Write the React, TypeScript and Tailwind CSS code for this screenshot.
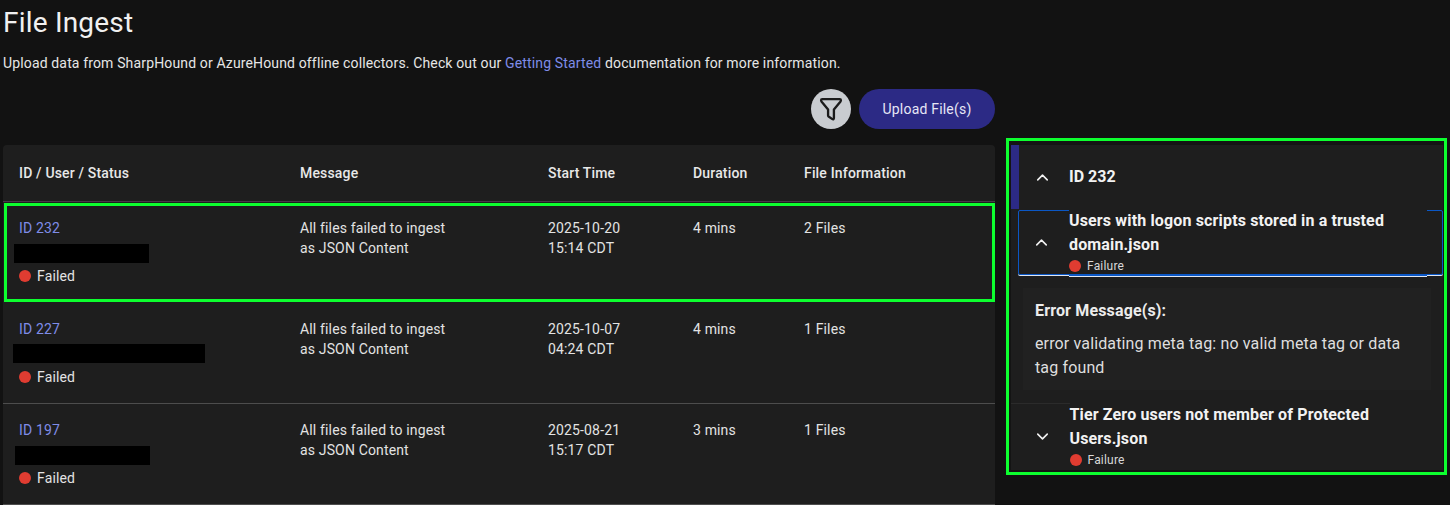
import React from "react";
import { ChevronDown, ChevronUp } from "lucide-react";

type Ingest = {
  id: number;
  barClass: string;
  statusClass: string;
  date: string;
  time: string;
  duration: string;
  files: string;
  rowClass: string;
};

const ingests: Ingest[] = [
  {
    id: 232,
    barClass: "w-[135px] ml-[-5px] mt-[6px]",
    statusClass: "mt-[3px]",
    date: "2025-10-20",
    time: "15:14 CDT",
    duration: "4 mins",
    files: "2 Files",
    rowClass:
      "h-[99px] pt-[15px] outline-3 -outline-offset-3 outline-[#0dff2f] ml-[1px] mt-[1px] mb-[2px] pl-[15px]",
  },
  {
    id: 227,
    barClass: "w-[192px] ml-[-6px] mt-[5px]",
    statusClass: "mt-[4px]",
    date: "2025-10-07",
    time: "04:24 CDT",
    duration: "4 mins",
    files: "1 Files",
    rowClass: "h-[100px] pt-[15px] border-b border-[#4d4d4d] pl-4",
  },
  {
    id: 197,
    barClass: "w-[135px] ml-[-4px] mt-[6px]",
    statusClass: "mt-[3px]",
    date: "2025-08-21",
    time: "15:17 CDT",
    duration: "3 mins",
    files: "1 Files",
    rowClass: "h-[101px] pt-[16px] border-b border-[#4d4d4d] pl-4",
  },
];

const StatusDot: React.FC = () => (
  <span className="w-3 h-3 rounded-full bg-[#e03c31] shrink-0"></span>
);

const FilterIcon: React.FC = () => (
  <svg width="28" height="28" viewBox="0 0 24 24" fill="none" stroke="#1b1b1b" strokeWidth="2" strokeLinejoin="round" strokeLinecap="round">
    <path d="M3.5 4.5 C3.5 3.9 3.9 3.5 4.5 3.5 H19.5 C20.1 3.5 20.5 3.9 20.5 4.5 C20.5 5 20.3 5.4 20 5.8 L14.5 12.5 V19.8 C14.5 20.7 13.8 21.1 13.2 20.7 L10.5 18.9 C10 18.6 9.5 18.2 9.5 17.5 V12.5 L4 5.8 C3.7 5.4 3.5 5 3.5 4.5 Z" />
  </svg>
);

const Row: React.FC<{ ingest: Ingest }> = ({ ingest }) => (
  <div className={`grid grid-cols-[281px_248px_145px_111px_1fr] text-[14px] leading-5 tracking-[0.15px] text-[#e3e3e3] ${ingest.rowClass}`}>
    <div className="flex flex-col">
      <span className="text-[#7f8ce8] h-5">ID {ingest.id}</span>
      <div className={`${ingest.barClass} h-[19px] bg-black`}></div>
      <p className={`flex items-center gap-[6px] ${ingest.statusClass}`}>
        <StatusDot />
        Failed
      </p>
    </div>
    <p>
      All files failed to ingest
      <br />
      as JSON Content
    </p>
    <p>
      {ingest.date}
      <br />
      {ingest.time}
    </p>
    <p>{ingest.duration}</p>
    <p>{ingest.files}</p>
  </div>
);

const IngestTable: React.FC = () => (
  <div className="bg-[#1e1e1e] rounded-t-[4px] overflow-hidden">
    <div className="grid grid-cols-[281px_248px_145px_111px_1fr] h-[57px] pl-4 items-center border-b border-[#4a3a4a] text-[14px] font-medium tracking-[0.17px] text-[#e8e8e8]">
      <span>ID / User / Status</span>
      <span>Message</span>
      <span>Start Time</span>
      <span>Duration</span>
      <span>File Information</span>
    </div>
    {ingests.map((ingest) => (
      <Row key={ingest.id} ingest={ingest} />
    ))}
  </div>
);

const FailedFile: React.FC<{
  lines: string[];
  open?: boolean;
  className?: string;
  contentClass?: string;
}> = ({ lines, open, className, contentClass }) => (
  <div className={`${className} flex`}>
    <span className="w-[50px] flex items-center pl-[13px] shrink-0">
      {open ? (
        <ChevronUp size={19} color="#f2f2f2" strokeWidth={2} />
      ) : (
        <ChevronDown size={19} color="#f2f2f2" strokeWidth={2} />
      )}
    </span>
    <div className={`${contentClass} flex flex-col flex-1 bg-[#1e1e1e]`}>
      <p className="text-[16px] leading-6 font-bold tracking-[0.15px] text-[#f2f2f2] whitespace-nowrap">
        {lines[0]}
        <br />
        {lines[1]}
      </p>
      <p className="flex items-center gap-[6px] text-[12px] leading-[18px] tracking-[0.2px] text-[#d8d8d8]">
        <StatusDot />
        Failure
      </p>
    </div>
  </div>
);

const DetailPanel: React.FC = () => (
  <div className="w-[441px] h-[337px] border-[3px] border-[#0dff2f] pt-1 pl-[2px] pb-[2px] pr-[1px] bg-[#141414]">
    <div className="h-full bg-[#1e1e1e] flex flex-col">
      <div className="flex items-center h-[64px] shrink-0 border-l-[8px] border-[#2c2a85]">
        <span className="w-[50px] flex pl-[14px] shrink-0">
          <ChevronUp size={19} color="#f2f2f2" strokeWidth={2} />
        </span>
        <span className="text-[16px] font-bold text-[#f2f2f2]">ID 232</span>
      </div>
      <FailedFile
        open
        lines={["Users with logon scripts stored in a trusted", "domain.json"]}
        className="ml-[7px] mt-[1px] h-[65px] shrink-0 border-[1.5px] border-[#0b57c5] rounded-[2px] shadow-[0_1px_0_0_#dfe6f2]"
        contentClass="-mt-[2px] -mb-[2px] mr-[15px] border-b-2 border-[#0b57c5] shadow-[0_1px_0_0_#dfe6f2]"
      />
      <div className="bg-[#212121] mx-3 mt-[13px] h-[102px] px-3 pt-[11px] shrink-0">
        <p className="text-[16px] leading-6 font-bold tracking-[0.15px] text-[#ececec]">Error Message(s):</p>
        <p className="text-[16px] leading-6 tracking-[0.14px] text-[#dedede] mt-[9px]">
          error validating meta tag: no valid meta tag or data
          <br />
          tag found
        </p>
      </div>
      <FailedFile
        lines={["Tier Zero users not member of Protected", "Users.json"]}
        className="mt-[13px] pl-[8.5px] h-[66px] shrink-0 border-t border-[#2b2b2b]"
        contentClass="-mt-[1px]"
      />
    </div>
  </div>
);

export default function App() {
  return (
    <div className="w-[1450px] h-[505px] overflow-hidden bg-[#121212] font-['Roboto',sans-serif] pl-[3px]">
      <h1 className="text-[28px] leading-[36px] pt-[5px] text-[#f0f0f0] tracking-[0.2px]">File Ingest</h1>
      <p className="text-[14px] leading-5 mt-[12px] tracking-[0.145px] text-[#e6e6e6]">
        Upload data from SharpHound or AzureHound offline collectors. Check out our{" "}
        <span className="text-[#7f8ce8]">Getting Started</span> documentation for more information.
      </p>
      <div className="flex gap-[11px] mt-[16px]">
        <div className="w-[992px] shrink-0">
          <div className="flex justify-end items-center gap-2 h-10">
            <button className="w-10 h-10 rounded-full bg-[#c9ccd0] flex items-center justify-center">
              <FilterIcon />
            </button>
            <button className="w-[136px] h-10 rounded-full bg-[#2c2a85] text-[14px] tracking-[0.2px] text-[#e6e6f5]">
              Upload File(s)
            </button>
          </div>
          <div className="mt-4">
            <IngestTable />
          </div>
        </div>
        <div className="pt-[49px]">
          <DetailPanel />
        </div>
      </div>
    </div>
  );
}
